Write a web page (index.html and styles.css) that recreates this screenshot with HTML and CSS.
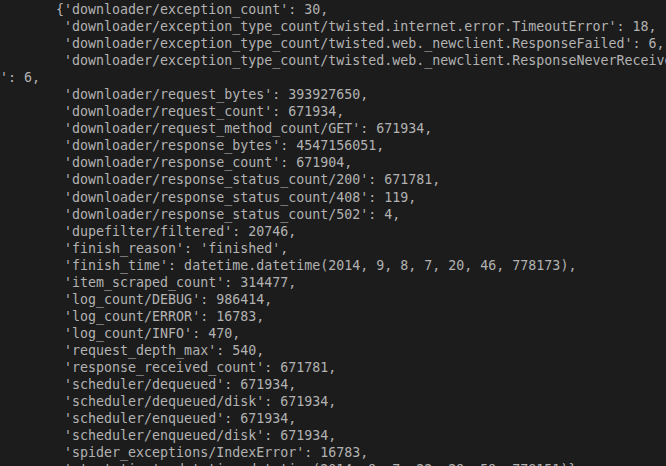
FILE: index.html
```html
<!DOCTYPE html>
<html>
<head>
<meta charset="utf-8">
<link rel="stylesheet" href="styles.css">
</head>
<body>
<pre class="term">       {'downloader/exception_count': 30,
        'downloader/exception_type_count/twisted.internet.error.TimeoutError': 18,
        'downloader/exception_type_count/twisted.web._newclient.ResponseFailed': 6,
        'downloader/exception_type_count/twisted.web._newclient.ResponseNeverReceived
': 6,
        'downloader/request_bytes': 393927650,
        'downloader/request_count': 671934,
        'downloader/request_method_count/GET': 671934,
        'downloader/response_bytes': 4547156051,
        'downloader/response_count': 671904,
        'downloader/response_status_count/200': 671781,
        'downloader/response_status_count/408': 119,
        'downloader/response_status_count/502': 4,
        'dupefilter/filtered': 20746,
        'finish_reason': 'finished',
        'finish_time': datetime.datetime(2014, 9, 8, 7, 20, 46, 778173),
        'item_scraped_count': 314477,
        'log_count/DEBUG': 986414,
        'log_count/ERROR': 16783,
        'log_count/INFO': 470,
        'request_depth_max': 540,
        'response_received_count': 671781,
        'scheduler/dequeued': 671934,
        'scheduler/dequeued/disk': 671934,
        'scheduler/enqueued': 671934,
        'scheduler/enqueued/disk': 671934,
        'spider_exceptions/IndexError': 16783,
        'start_time': datetime.datetime(2014, 9, 7, 22, 29, 59, 778151)}</pre>
</body>
</html>
```
FILE: styles.css
```css
html, body {
  margin: 0;
  padding: 0;
  background: #1c1c1c;
  width: 666px;
  height: 466px;
  overflow: hidden;
}

.term {
  margin: 0;
  padding: 1px 0 0 0;
  font-family: "DejaVu Sans Mono", "Liberation Mono", monospace;
  font-size: 13.3px;
  line-height: 17.05px;
  color: #b2b2b2;
  white-space: pre;
  overflow: hidden;
}
```
